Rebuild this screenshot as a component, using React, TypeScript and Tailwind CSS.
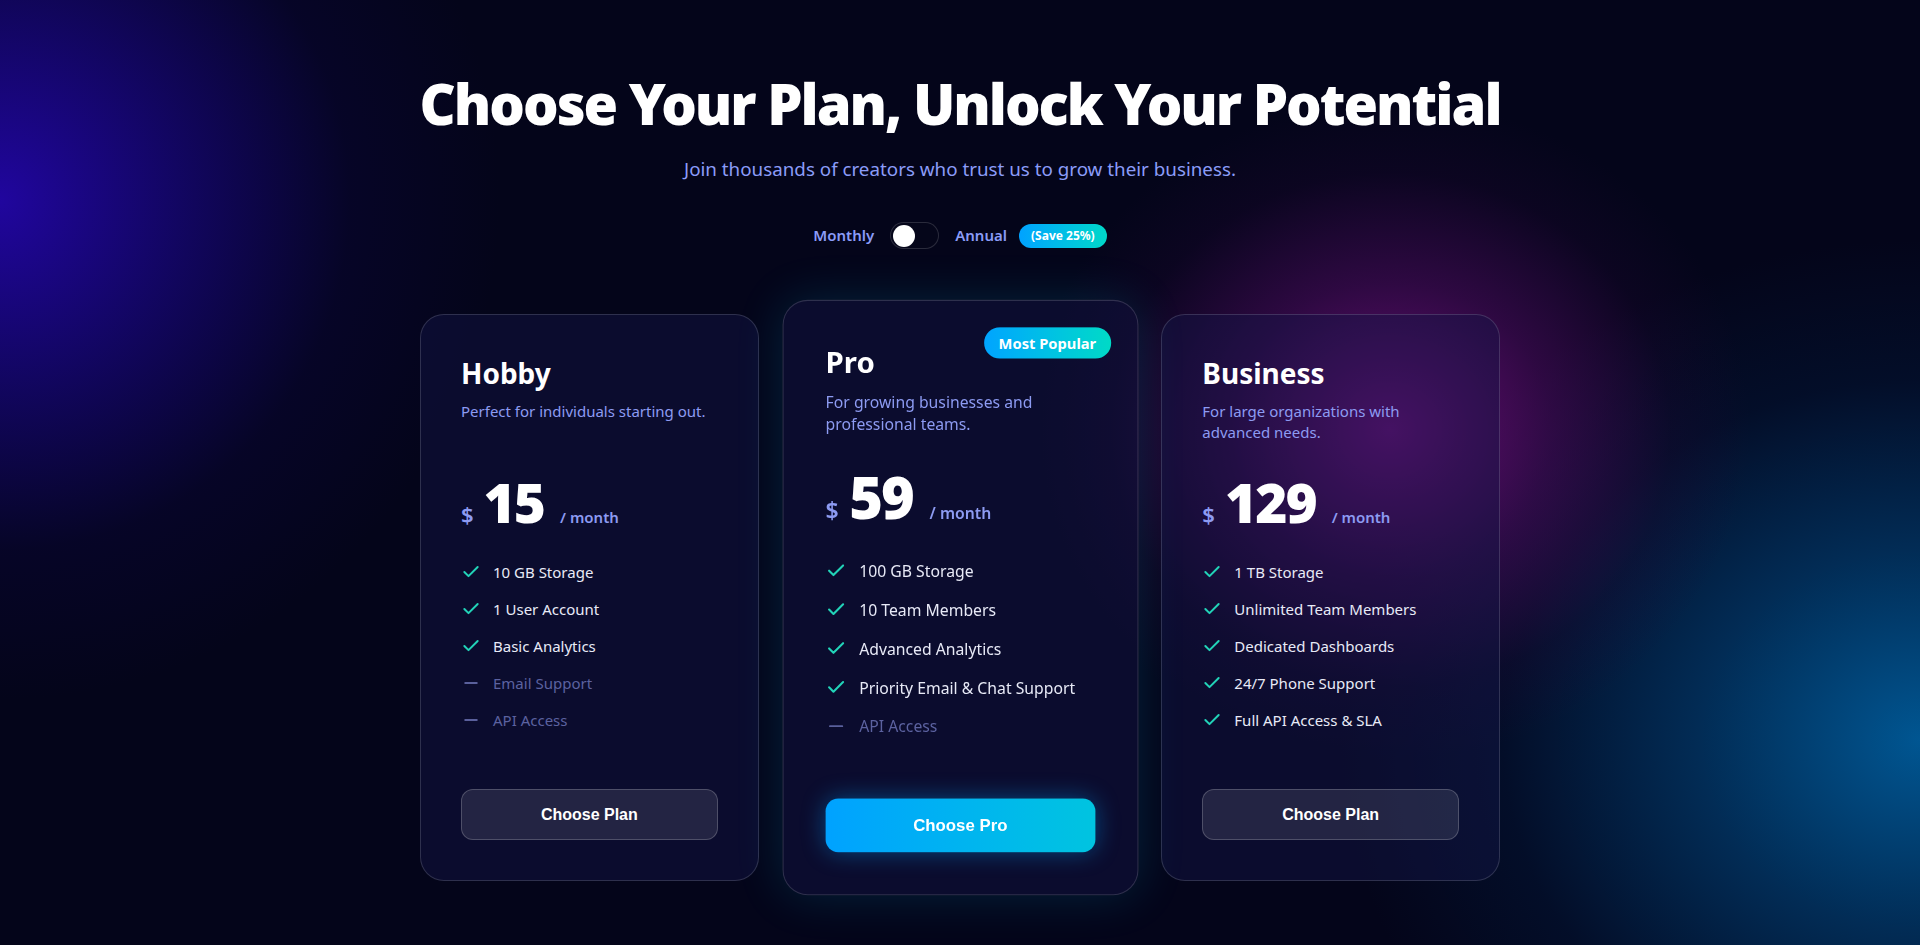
import { Check, Minus } from "lucide-react";

type Feature = { text: string; included: boolean };
type Plan = {
  name: string;
  desc: string[];
  price: string;
  features: Feature[];
  cta: string;
  featured?: boolean;
};

const plans: Plan[] = [
  {
    name: "Hobby",
    desc: ["Perfect for individuals starting out."],
    price: "15",
    cta: "Choose Plan",
    features: [
      { text: "10 GB Storage", included: true },
      { text: "1 User Account", included: true },
      { text: "Basic Analytics", included: true },
      { text: "Email Support", included: false },
      { text: "API Access", included: false },
    ],
  },
  {
    name: "Pro",
    desc: ["For growing businesses and", "professional teams."],
    price: "59",
    cta: "Choose Pro",
    featured: true,
    features: [
      { text: "100 GB Storage", included: true },
      { text: "10 Team Members", included: true },
      { text: "Advanced Analytics", included: true },
      { text: "Priority Email & Chat Support", included: true },
      { text: "API Access", included: false },
    ],
  },
  {
    name: "Business",
    desc: ["For large organizations with", "advanced needs."],
    price: "129",
    cta: "Choose Plan",
    features: [
      { text: "1 TB Storage", included: true },
      { text: "Unlimited Team Members", included: true },
      { text: "Dedicated Dashboards", included: true },
      { text: "24/7 Phone Support", included: true },
      { text: "Full API Access & SLA", included: true },
    ],
  },
];

function PlanCard({ plan }: { plan: Plan }) {
  return (
    <div
      className={
        plan.featured
          ? "relative z-10 flex scale-105 flex-col rounded-3xl border border-white/15 bg-[rgba(20,22,70,0.45)] p-10 shadow-[0_0_45px_rgba(0,190,230,0.16)]"
          : "relative flex flex-col rounded-3xl border border-white/15 bg-[rgba(20,22,70,0.45)] p-10"
      }
    >
      {plan.featured && (
        <div className="absolute right-[25px] top-[25px] flex h-[30px] items-center rounded-full bg-gradient-to-r from-[#00a4ff] to-[#00dac6] px-[14px] text-[14px] font-bold text-white">
          Most Popular
        </div>
      )}
      <h3 className="text-[28px] font-bold leading-[36px] text-white">{plan.name}</h3>
      <p className="mt-[10px] min-h-[42px] whitespace-nowrap text-[15px] leading-[21px] text-[#8d9bf2]">
        {plan.desc.map((line, i) => (
          <span key={i} className="block">
            {line}
          </span>
        ))}
      </p>
      <div className="mt-[31px] flex h-[56px] items-baseline">
        <span className="mr-[10px] text-[22px] font-semibold text-[#8d9bf2]">$</span>
        <span className="text-[55px] font-black leading-none tracking-[-2px] text-white">{plan.price}</span>
        <span className="ml-4 text-[15px] font-semibold text-[#8d9bf2]">/ month</span>
      </div>
      <ul className="mt-[30px] flex flex-col gap-[13px]">
        {plan.features.map((f) => (
          <li key={f.text} className="flex h-6 items-center gap-3 text-[15px] leading-6">
            {f.included ? (
              <Check size={20} strokeWidth={2.4} className="shrink-0 text-[#22d3b8]" />
            ) : (
              <Minus size={20} strokeWidth={2.2} className="shrink-0 text-[#5a609c]" />
            )}
            <span className={f.included ? "text-[#e8eaf7]" : "text-[#5c62a0]"}>{f.text}</span>
          </li>
        ))}
      </ul>
      <button
        className={
          plan.featured
            ? "mt-[57px] h-[51px] w-full rounded-xl bg-gradient-to-r from-[#00a2ff] to-[#00c4e0] font-['Liberation_Sans',Arial,sans-serif] text-[16px] font-bold text-white shadow-[0_0_22px_rgba(0,160,255,0.4)]"
            : "mt-[57px] h-[51px] w-full rounded-xl border border-white/20 bg-white/10 font-['Liberation_Sans',Arial,sans-serif] text-[16px] font-bold text-white"
        }
      >
        {plan.cta}
      </button>
    </div>
  );
}

export default function App() {
  return (
    <div className="min-h-screen w-full bg-[#04051a] bg-[radial-gradient(500px_500px_at_0px_200px,rgba(34,6,165,0.95)_0%,rgba(26,6,138,0.65)_35%,rgba(12,5,72,0.28)_70%,transparent_100%),radial-gradient(360px_330px_at_1390px_430px,rgba(120,16,132,0.9)_0%,rgba(84,12,102,0.52)_45%,rgba(42,6,60,0.2)_78%,transparent_100%),radial-gradient(580px_500px_at_1920px_740px,rgba(0,90,152,0.95)_0%,rgba(0,68,122,0.62)_38%,rgba(0,36,78,0.28)_72%,transparent_100%)] font-['Noto_Sans',sans-serif] text-white">
      <div className="mx-auto flex max-w-[1080px] flex-col items-center pt-[70px] pb-10">
        <h1 className="whitespace-nowrap text-center text-[56px] font-black leading-[1.2] tracking-[-2px] text-white">
          Choose Your Plan, Unlock Your Potential
        </h1>
        <p className="mt-[18px] text-[18.8px] leading-7 text-[#8b9cf8]">
          Join thousands of creators who trust us to grow their business.
        </p>
        <div className="mt-[39px] flex items-center gap-4 text-[15px] font-semibold text-[#8b9cf8]">
          <span>Monthly</span>
          <div className="flex h-[27px] w-[49px] items-center rounded-full border border-white/15 bg-[#05061a] px-[2px]">
            <div className="h-[22px] w-[22px] rounded-full bg-white" />
          </div>
          <div className="flex items-center gap-3">
            <span>Annual</span>
            <span className="flex h-6 items-center rounded-full bg-gradient-to-r from-[#00a2ff] to-[#00d8c8] px-3 text-[12px] font-bold text-white">
              (Save 25%)
            </span>
          </div>
        </div>
        <div className="mt-[65px] grid w-full grid-cols-3 gap-8">
          {plans.map((p) => (
            <PlanCard key={p.name} plan={p} />
          ))}
        </div>
      </div>
    </div>
  );
}
